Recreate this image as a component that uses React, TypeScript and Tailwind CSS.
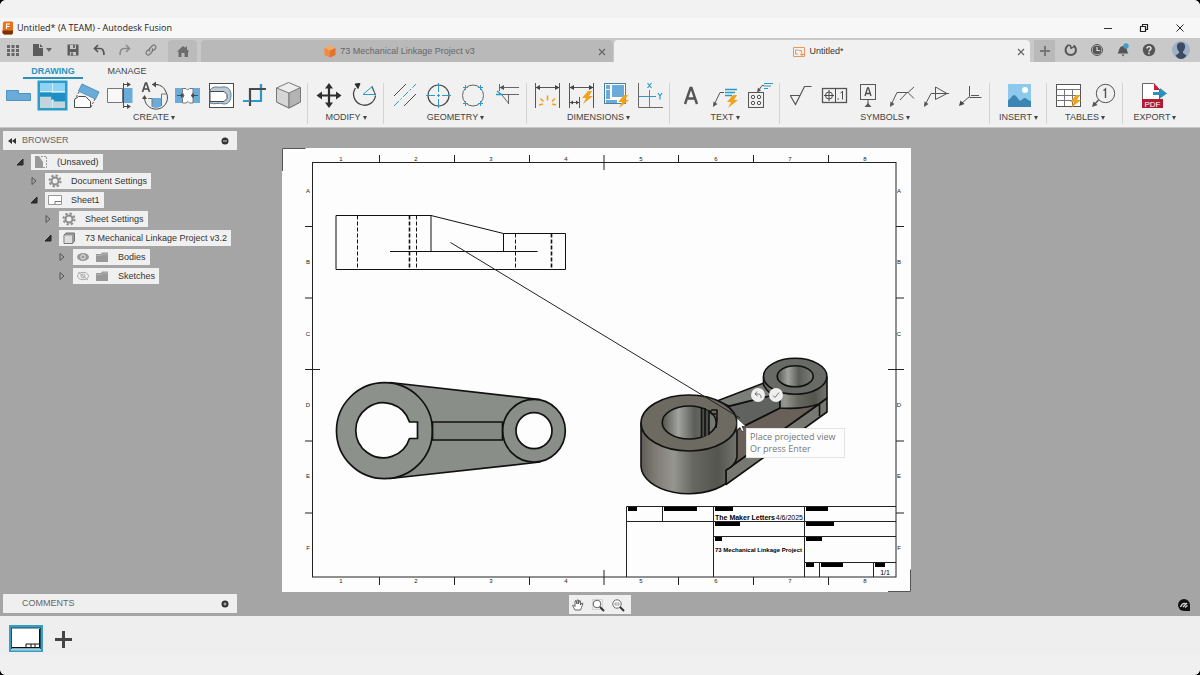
import React from "react";
import type { ReactNode } from "react";

const BLUE = "#6aabda";
const TEAL = "#2b9ac8";
const INK = "#4a4a4a";
const GOLD = "#f0a21e";

function Icon({ children }: { children: ReactNode }) {
  return (
    <svg viewBox="0 0 32 32" className="block h-8 w-8" fill="none" stroke={INK} strokeWidth="1" aria-hidden="true">
      {children}
    </svg>
  );
}

function Bolt({ x, y }: { x: number; y: number }) {
  return <path transform={`translate(${x} ${y})`} d="M6 0L0 7h4L1 13l10-8H7l3-5z" fill={GOLD} stroke="none" />;
}

type Tool = { name: string; art: ReactNode };
type Group = { label: string; width: string; tools: Tool[] };

const groups: Group[] = [
  {
    label: "CREATE",
    width: "w-[308px] justify-between pl-0.5 pr-[3px]",
    tools: [
      {
        name: "Base View",
        art: <path d="M4.5 11.5h12v3h12v7h-24z" fill={BLUE} stroke="#4f93c0" />,
      },
      {
        name: "Projected View",
        art: (
          <g stroke="none">
            <rect x="1.500" y="1.500" width="30" height="30" fill="#2a9dcc" />
            <rect x="4" y="4" width="25" height="11" fill="#8ed3f3" />
            <path d="M4 17.500h11v3h3v2h11V29H4z" fill="#c3d4dc" />
            <path d="M16.500 4v25M4 12.500h25" stroke="#d7eef8" />
            <path d="M4 13.500h12v4H4zM16 14h13v8H19v-1.500h-3z" fill="#1e8fc4" />
          </g>
        ),
      },
      {
        name: "Auxiliary View",
        art: (
          <g>
            <path d="M12 5l17 8-3.500 7-17-8z" fill={BLUE} stroke="#4f93c0" />
            <path d="M4.500 28.500v-8l4-3h7l5 5v6z" fill="#fff" />
            <path d="M9 13l-4 7M25 20l-4 8" strokeDasharray="2 1.5" />
          </g>
        ),
      },
      {
        name: "Section View",
        art: (
          <g>
            <path d="M3.500 9.500h15v14h-15z" fill="#f8f8f8" stroke="#777" />
            <path d="M19.500 9h9v15h-9z" fill={BLUE} stroke="none" />
            <path d="M19.500 4v25M19.500 5.500h5M19.500 27.500h5" />
            <path d="M23 3l4 2.500L23 8zM23 25l4 2.500-4 2.500z" fill={INK} stroke="none" />
          </g>
        ),
      },
      {
        name: "Detail View",
        art: (
          <g>
            <path d="M14 19h9v8.500a10 10 0 01-9 .5z" fill={BLUE} stroke="none" />
            <path d="M10 19.500h4v8M23.500 27v-12h5" stroke="#777" />
            <path d="M28 13a11.500 11.500 0 11-21.500 6M18 5.500a11.500 11.500 0 0110 7.500M14 5.500h6" />
            <path d="M18 2.500l-4 3 4 3zM6.500 16l-2.500 4h5z" fill={INK} stroke="none" />
            <path d="M4.500 13l3-9h1l3 9M5.500 10h5" strokeWidth="1.600" />
          </g>
        ),
      },
      {
        name: "Break View",
        art: (
          <g>
            <path d="M4 9h8v15H4zM21 9h8v15h-8z" fill={BLUE} stroke="none" />
            <path d="M11.500 9.500H15l1.500 1.500 2-1.500H22v4l-1.500 3 1.500 3v4.500h-3.500L17 22.500 15 24h-3.500v-4.500l1.500-3-1.500-3z" fill="#fff" stroke="#777" />
            <path d="M6 16.500h6M27 16.500h-6" />
            <path d="M10 14l3 2.500-3 2.500zM23 14l-3 2.500 3 2.500z" fill={INK} stroke="none" />
          </g>
        ),
      },
      {
        name: "Breakout View",
        art: (
          <g>
            <rect x="4.500" y="4.500" width="24" height="24" fill="#fff" />
            <path d="M5 11c4-5 8-2 12-3 5-1 9 2 9 8 0 5-2 9-7 9-5-2-9 1-14-1z" fill="#b9cad6" stroke="#5f7f98" />
            <path d="M5 12.500h14l3 3v4l-3 3H5z" fill="#fff" />
          </g>
        ),
      },
      {
        name: "Crop View",
        art: (
          <g strokeWidth="2.200">
            <path d="M22 5v17H5" stroke={TEAL} />
            <path d="M27 10H11v17" stroke={INK} />
            <path d="M4 22h7M22 5v4" stroke={TEAL} />
          </g>
        ),
      },
      {
        name: "Create Body",
        art: (
          <g stroke="#777" strokeWidth="1">
            <path d="M3.500 9l12-5.500 12 5v14.500l-11.500 6-12.500-6z" fill="#eee" />
            <path d="M3.500 9l12.500 5v15l-12.500-6z" fill="#d5d5d5" />
            <path d="M16 14l11.500-5.500V23L16 29z" fill="#b3b3b3" />
          </g>
        ),
      },
    ],
  },
  {
    label: "MODIFY",
    width: "w-[76px] justify-between px-1",
    tools: [
      {
        name: "Move",
        art: (
          <g>
            <path d="M17 8v17M8.500 16.500h17" strokeWidth="2.200" stroke="#2e2e2e" />
            <path d="M17 4l4 5.500h-8zM17 29l4-5.500h-8zM4.500 16.500L10 12.500v8zM29.500 16.500L24 12.500v8z" fill="#2e2e2e" stroke="none" />
          </g>
        ),
      },
      {
        name: "Rotate",
        art: (
          <g>
            <path d="M7.500 9A11 11 0 1027.500 16.500" stroke="#444" strokeWidth="1.300" />
            <path d="M12 4.500l-5 .5 3 4.500z" fill="#2e2e2e" stroke="#2e2e2e" />
            <path d="M15 15.500h12M15 15.500L23.500 8l4 7.500" stroke={TEAL} />
            <path d="M24 7l3.500 9" stroke="#555" />
          </g>
        ),
      },
    ],
  },
  {
    label: "GEOMETRY",
    width: "w-[143px] justify-between px-1",
    tools: [
      {
        name: "Centerline",
        art: (
          <g>
            <path d="M6 17L18 5M16 27L28 15" />
            <path d="M6 27L28 5" stroke={TEAL} strokeDasharray="7 2 2 2" />
          </g>
        ),
      },
      {
        name: "Center Mark",
        art: (
          <g>
            <circle cx="16.500" cy="16.500" r="10.500" strokeWidth="1.200" />
            <path d="M16.500 4v9M16.500 15v3M16.500 20v9M4 16.500h9M15 16.500h3M20 16.500h9" stroke={TEAL} />
          </g>
        ),
      },
      {
        name: "Center Mark Pattern",
        art: (
          <g>
            <circle cx="16" cy="16.500" r="10.500" stroke="#666" />
            <path d="M8.500 6v5M6 8.500h5M23.500 6v5M21 8.500h5M8.500 22v5M6 24.500h5M23.500 22v5M21 24.500h5" stroke={TEAL} />
          </g>
        ),
      },
      {
        name: "Edge Extension",
        art: (
          <g>
            <path d="M8.500 5v7M9 8.500h19M11 15.500h17M11 16L18 25M17.500 15v10" stroke="#666" />
            <path d="M13 6L8.500 8.500 13 11z" fill="#555" stroke="none" />
            <path d="M5 15.500h7M6 12l5 4" stroke={TEAL} strokeWidth="1.400" />
          </g>
        ),
      },
    ],
  },
  {
    label: "DIMENSIONS",
    width: "w-[143px] justify-between px-1",
    tools: [
      {
        name: "Dimension",
        art: (
          <g>
            <path d="M4.500 4v25M28.500 4v25M5 8.500h23" stroke="#555" />
            <path d="M9 6L4.500 8.500 9 11zM24 6l4.500 2.500L24 11z" fill="#444" stroke="none" />
            <path d="M8 26l4-1M9.500 19.500l3 3M16.500 16.500v5M24 19.500l-3 3M25 26l-4-1" stroke={GOLD} strokeWidth="1.600" />
          </g>
        ),
      },
      {
        name: "Baseline Dimension",
        art: (
          <g>
            <path d="M4.500 4v25M28.500 4v25M5 8.500h23M14.500 18v11M5 23.500h9" stroke="#555" />
            <path d="M9 6L4.500 8.500 9 11zM24 6l4.500 2.500L24 11zM8 21.500L5 23.500l3 2zM11 21.500l3 2-3 2z" fill="#444" stroke="none" />
            <Bolt x={17} y={12} />
          </g>
        ),
      },
      {
        name: "Auto Dimension",
        art: (
          <g>
            <rect x="4.500" y="4.500" width="21" height="20" fill="#fff" stroke="#4a7f9e" />
            <path d="M6 6h4v4H6zM6 11h4v9H6zM12 6h12v12H12zM6 21h11v3H6z" fill={BLUE} stroke="none" />
            <Bolt x={18} y={16} />
          </g>
        ),
      },
      {
        name: "Ordinate Dimension",
        art: (
          <g>
            <path d="M4.500 4v24.500H29" stroke="#666" />
            <path d="M5 17.500h17M15.500 11v17" stroke={TEAL} />
            <path d="M13.500 4l4 5M17.500 4l-4 5M24 14l2 3 2-3M26 17v3.500" stroke={TEAL} strokeWidth="1.200" />
          </g>
        ),
      },
    ],
  },
  {
    label: "TEXT",
    width: "w-[110px] justify-between px-1",
    tools: [
      {
        name: "Text",
        art: <path d="M11 25l5.500-16h1L23 25M12.500 19.500h9" stroke="#555" strokeWidth="2.400" />,
      },
      {
        name: "Leader Note",
        art: (
          <g>
            <path d="M5 26l6-12.500h4" stroke="#555" />
            <path d="M4 28l.500-5.500 4 2.500z" fill="#555" stroke="none" />
            <path d="M16 10.500h12M16 13.500h10M16 16.500h7" stroke={TEAL} strokeWidth="1.500" />
            <Bolt x={18} y={16} />
          </g>
        ),
      },
      {
        name: "Hole Table Note",
        art: (
          <g stroke="#555">
            <rect x="4.500" y="13.500" width="15" height="15" />
            <circle cx="9" cy="18" r="1.700" />
            <circle cx="15" cy="18" r="1.700" />
            <circle cx="9" cy="24" r="1.700" />
            <circle cx="15" cy="24" r="1.700" />
            <path d="M15 11l3-4.500h2" />
            <path d="M13 13.500l1-5 3 3z" fill="#555" stroke="none" />
            <path d="M20 4.500h9M20 7h7M20 9.500h4" stroke={TEAL} />
          </g>
        ),
      },
    ],
  },
  {
    label: "SYMBOLS",
    width: "w-[210px] justify-between px-1",
    tools: [
      {
        name: "Surface Texture",
        art: <path d="M6 16.500h10M6.500 17l5 8.500 9-18h7" stroke="#555" strokeWidth="1.200" />,
      },
      {
        name: "Feature Control Frame",
        art: (
          <g>
            <rect x="4.500" y="9.500" width="24" height="14" stroke="#555" strokeWidth="1.300" />
            <path d="M17.500 10v13M6 16.500h10M11 11v11M24.500 12v8.500M22.500 14l2-1.500M19.500 20h1.500" />
            <circle cx="11" cy="16.500" r="3.500" />
          </g>
        ),
      },
      {
        name: "Datum Identifier",
        art: (
          <g>
            <rect x="8.500" y="5.500" width="15" height="15" stroke="#555" />
            <path d="M13 17l2.500-8h1l2.500 8M14 14.500h4.500" strokeWidth="1.300" />
            <path d="M16 21v5" />
            <path d="M16 24l3.500 4h-7z" fill="#555" stroke="none" />
          </g>
        ),
      },
      {
        name: "Welding",
        art: (
          <g stroke="#555">
            <path d="M5 26l6-12.500h11M14 21l7-7.500M28 8l-6 5.500 6 6" />
            <path d="M4 28l.500-5.500 4 2.500z" fill="#555" stroke="none" />
          </g>
        ),
      },
      {
        name: "Taper and Slope",
        art: (
          <g stroke="#555">
            <path d="M5 26l6-11.500h18M15.500 8v12.500l11.500-6z" />
            <path d="M4 28l.500-5.500 4 2.500z" fill="#555" stroke="none" />
          </g>
        ),
      },
      {
        name: "Bend Identifier",
        art: (
          <g stroke="#555">
            <path d="M15.500 7v10.500L7 25M15.500 18.500h12M17 16.500h8" />
            <path d="M5 27l1.500-5.500L10.500 25z" fill="#444" stroke="none" />
          </g>
        ),
      },
    ],
  },
  {
    label: "INSERT",
    width: "w-[57px] justify-center",
    tools: [
      {
        name: "Insert Image",
        art: (
          <g stroke="none">
            <rect x="5" y="5" width="23" height="23" fill="#8cc9ec" />
            <circle cx="22" cy="11" r="3" fill="#fff" />
            <path d="M5 21c3-1 4-5 6-5s4 4 6 6c2-1 3-3 5-3s3 3 6 3v6H5z" fill="#3c86b4" />
          </g>
        ),
      },
    ],
  },
  {
    label: "TABLES",
    width: "w-[76px] justify-between px-1",
    tools: [
      {
        name: "Table",
        art: (
          <g>
            <rect x="5.500" y="5.500" width="24" height="22" fill="#fff" stroke="#555" />
            <path d="M5.500 10.500h24M5.500 16.500h24M5.500 21.500h24M13.500 10v17M21.500 10v17" stroke="#777" />
            <Bolt x={19} y={16} />
          </g>
        ),
      },
      {
        name: "Balloon",
        art: (
          <g stroke="#555">
            <circle cx="18.500" cy="14.500" r="9.200" />
            <path d="M11.500 21L7 26M16.500 11.500l2-1.500v9" strokeWidth="1.400" />
            <path d="M5 28l1.500-5.500L10.500 26z" fill="#555" stroke="none" />
          </g>
        ),
      },
    ],
  },
  {
    label: "EXPORT",
    width: "w-[64px] justify-center",
    tools: [
      {
        name: "Export PDF",
        art: (
          <g>
            <path d="M3.500 28V4.500h11l6 6V20" fill="#fff" stroke="#666" />
            <path d="M15 4v7h6z" fill="#c8203c" stroke="none" />
            <path d="M14 13h7V9l7 5.500-7 5V16h-7z" fill="#2d8fc0" stroke="none" />
            <rect x="3" y="20" width="21" height="9" fill="#b01c34" stroke="none" />
            <text x="13.500" y="28" textAnchor="middle" fill="#fff" stroke="none" className="font-['Liberation_Sans'] text-[8px]">
              PDF
            </text>
          </g>
        ),
      },
    ],
  },
];

function Ribbon() {
  return (
    <section className="border-b border-[#c9c9c9] bg-[#f1f1f1] pb-[3px]">
      <div className="flex h-[17px] pl-[23px] text-[9px] leading-[17px]">
        <button className="w-[60px] border-b-2 border-[#2b8fb8] pt-px font-bold text-[#2b93c0]">DRAWING</button>
        <button className="ml-3.5 w-[60px] border-b-2 border-transparent pt-px text-[#444]">MANAGE</button>
      </div>
      <div className="flex">
        {groups.map((g, i) => (
          <div key={g.label} className="relative flex shrink-0 flex-col">
            <div className={`flex ${g.width}`}>
              {g.tools.map((t) => (
                <button key={t.name} aria-label={t.name} className="h-8 w-8">
                  <Icon>{t.art}</Icon>
                </button>
              ))}
            </div>
            <button className="flex h-[13px] items-center justify-center gap-0.5 text-[9px] leading-[13px] text-[#444]">
              {g.label}
              <span className="h-0 w-0 border-x-[2px] border-t-4 border-x-transparent border-t-[#444]" />
            </button>
            {i < groups.length - 1 && <span className="absolute top-1 right-0 bottom-0 w-px bg-[#d4d4d4]" />}
          </div>
        ))}
      </div>
    </section>
  );
}

function SmallIcon({ children }: { children: ReactNode }) {
  return (
    <svg viewBox="0 0 16 16" className="block h-4 w-4" fill="none" stroke="#555" aria-hidden="true">
      {children}
    </svg>
  );
}

function TitleBar() {
  return (
    <header className="bg-[#f2f2f2] pt-[18px] font-['Open_Sans','Noto_Sans',sans-serif]">
      <div className="flex h-5 items-center bg-[#f7f7f7] pl-0.5">
        <svg viewBox="0 0 12 14" className="h-3.5 w-3" aria-hidden="true">
          <path d="M1 2l1-1.500h8l1 1V12l-1 1.500H2L.500 12z" fill="#e8701a" />
          <path d="M.500 9.500h10.500V12l-1 1.500H2L.500 12z" fill="#7c3208" />
          <path d="M4.500 8V3h3.500M4.500 5.500h3" stroke="#fff" strokeWidth="1.200" fill="none" />
        </svg>
        <h1 className="ml-[3px] flex-1 text-[9px] text-[#222]">Untitled* (A TEAM) - Autodesk Fusion</h1>
        <button aria-label="Minimize" className="flex w-9 justify-center">
          <span className="h-px w-2 bg-[#333]" />
        </button>
        <button aria-label="Restore" className="flex w-9 justify-center">
          <SmallIcon>
            <path d="M4.500 6.500h5v5h-5zM6.500 6V4.500h5v5H10" stroke="#222" strokeWidth="1.200" />
          </SmallIcon>
        </button>
        <button aria-label="Close window" className="mr-0.5 flex w-9 justify-center">
          <SmallIcon>
            <path d="M4.500 4.500l7 7M11.500 4.500l-7 7" stroke="#222" />
          </SmallIcon>
        </button>
      </div>
    </header>
  );
}

function CloseTab({ name }: { name: string }) {
  return (
    <button aria-label={`Close ${name}`} className="flex w-4 justify-center">
      <SmallIcon>
        <path d="M5 5l6 6M11 5l-6 6" stroke="#666" strokeWidth="1.200" />
      </SmallIcon>
    </button>
  );
}

function TabBar() {
  return (
    <nav className="flex h-6 bg-[#c9c9c9] text-[9px]">
      <button aria-label="Data panel" className="flex w-[25px] items-center justify-center">
        <SmallIcon>
          <path d="M2 3h3v3H2zM6.500 3h3v3h-3zM11 3h3v3h-3zM2 7h3v3H2zM6.500 7h3v3h-3zM11 7h3v3h-3zM2 11h3v3H2zM6.500 11h3v3h-3zM11 11h3v3h-3z" fill="#666" stroke="none" />
        </SmallIcon>
      </button>
      <button aria-label="File" className="flex w-[35px] items-center pl-[5px]">
        <SmallIcon>
          <path d="M3 2h6v4h4v8H3z" fill="#5c5c5c" stroke="none" />
          <path d="M10 2l3 3h-3z" fill="#5c5c5c" stroke="none" />
        </SmallIcon>
        <span className="h-0 w-0 border-x-[3px] border-t-4 border-x-transparent border-t-[#666]" />
      </button>
      <button aria-label="Save" className="flex w-[26px] items-center justify-center">
        <SmallIcon>
          <path d="M2.500 2.500h11v11h-11z" fill="#5c5c5c" stroke="none" />
          <path d="M5 3h6v4H5zM5 10h6v3H5z" fill="#c9c9c9" stroke="none" />
          <path d="M9 3v3M7 10.500v3" strokeWidth="1.600" />
        </SmallIcon>
      </button>
      <button aria-label="Undo" className="flex w-[26px] items-center justify-center">
        <SmallIcon>
          <path d="M7 3L3.500 6.500 7 10M4 6.500h5c3 0 4 2 4 6.500" strokeWidth="1.700" />
        </SmallIcon>
      </button>
      <button aria-label="Redo" className="flex w-[26px] items-center justify-center">
        <SmallIcon>
          <path d="M9 3l3.500 3.500L9 10M12 6.500H7c-3 0-4 2-4 6.500" stroke="#8a8a8a" strokeWidth="1.500" />
        </SmallIcon>
      </button>
      <button aria-label="Link" className="flex w-[26px] items-center justify-center">
        <SmallIcon>
          <path d="M7 9.500c-1.500-1.500-.500-3 .500-4l2-2c2-1.500 4.500 1 3 3l-2 2M9 6.500c1.500 1.500.500 3-.500 4l-2 2c-2 1.500-4.500-1-3-3l2-2" stroke="#777" strokeWidth="1.200" />
        </SmallIcon>
      </button>
      <button aria-label="Home" className="mt-0.5 ml-1 flex w-[29px] items-center justify-center rounded-t bg-[#bbbbbb]">
        <SmallIcon>
          <path d="M2 8.500L8 3l2.500 2V3.500H12V6.500l2.500 2H13V14H9.500v-4h-3v4H3.500V8.500z" fill="#6c6c6c" stroke="none" />
        </SmallIcon>
      </button>
      <div className="mt-0.5 ml-1 flex flex-1 items-center rounded-t bg-[#b9b9b9] pt-px pr-[3px] pl-1">
        <button className="flex flex-1 items-center justify-center gap-1 text-[#666]">
          <svg viewBox="0 0 12 13" className="h-[13px] w-3" aria-hidden="true">
            <path d="M.500 3L6 .500 11.500 3v7L6 12.500.500 10z" fill="#f6a866" />
            <path d="M.500 3L6 5.500v7L.500 10z" fill="#ee8a44" />
            <path d="M6 5.500L11.500 3v7L6 12.500z" fill="#dd7430" />
          </svg>
          73 Mechanical Linkage Project v3
        </button>
        <CloseTab name="73 Mechanical Linkage Project v3" />
      </div>
      <div className="mt-0.5 ml-px flex flex-1 items-center rounded-t bg-[#f1f1f1] pt-px pr-px pl-2.5">
        <button className="flex flex-1 items-center justify-center gap-1 text-[#333]">
          <svg viewBox="0 0 12 12" className="h-3 w-3" fill="none" stroke="#e9965f" aria-hidden="true">
            <path d="M.500 1.500h11v9H.500z" />
            <path d="M5 4H2.500v4H5M5.500 4.500h3v3M7 8.500h4M9 10V7.500" />
          </svg>
          Untitled*
        </button>
        <CloseTab name="Untitled" />
      </div>
      <button aria-label="New tab" className="mt-0.5 ml-1 flex w-[21px] items-center justify-center bg-[#b9b9b9]">
        <SmallIcon>
          <path d="M8 3v10M3 8h10" stroke="#777" strokeWidth="2" />
        </SmallIcon>
      </button>
      <button aria-label="Extensions" className="ml-[3px] flex w-[26px] items-center justify-center">
        <SmallIcon>
          <path d="M10.500 3.500a5.200 5.200 0 11-5.500 0" strokeWidth="2" />
          <path d="M4.500 3l3 .500.500 3.500M8 6.500l4-2.500" strokeWidth="1.400" />
        </SmallIcon>
      </button>
      <button aria-label="Job status" className="flex w-[26px] items-center justify-center">
        <SmallIcon>
          <circle cx="8" cy="8" r="5.500" />
          <circle cx="8" cy="8" r="4" fill="#555" />
          <path d="M8 5v3.500h3" stroke="#ddd" strokeWidth="1.200" />
        </SmallIcon>
      </button>
      <button aria-label="Notifications" className="flex w-[26px] items-center justify-center">
        <SmallIcon>
          <path d="M2.500 11.500c2-2 1-7 5.500-7.500s3.500 5.500 5.500 7.500zM6.500 12.500h3L8 14.500z" fill="#555" stroke="none" />
          <circle cx="11" cy="4" r="2.700" fill="#3b9fc9" stroke="none" />
        </SmallIcon>
      </button>
      <button aria-label="Help" className="flex w-[26px] items-center justify-center">
        <SmallIcon>
          <circle cx="8" cy="8" r="6.200" fill="#555" stroke="none" />
          <path d="M6 6.500c0-2.500 4-2.500 4 0C10 8 8 8 8 9.500M8 10.500v1.700" stroke="#eee" strokeWidth="1.400" />
        </SmallIcon>
      </button>
      <button aria-label="Account" className="flex w-[38px] items-center justify-center">
        <svg viewBox="0 0 18 18" className="h-[18px] w-[18px]" aria-hidden="true">
          <circle cx="9" cy="9" r="9" fill="#9fb1c8" />
          <path d="M9 1.500c3 0 4.500 2 4 5-.300 2-1 3-2 4v1.500l3.500 2.500C13 17 11 18 9 18s-4-1-5.500-3.500L7 12v-1.500c-1-1-1.700-2-2-4-.500-3 1-5 4-5z" fill="#3c4b62" />
        </svg>
      </button>
    </nav>
  );
}

const gear = (
  <SmallIcon>
    <circle cx="8" cy="8" r="3.500" stroke="#8c8c8c" strokeWidth="2" />
    <circle cx="8" cy="8" r="5.500" stroke="#8c8c8c" strokeWidth="2" strokeDasharray="2.3 2" />
  </SmallIcon>
);
const folder = (
  <SmallIcon>
    <path d="M2 5h5l1-1.500h6V13H2z" fill="#999" stroke="none" />
    <path d="M2 6.500h6l1-1.500h5" stroke="#bbb" strokeWidth=".7" />
  </SmallIcon>
);

type Row = { label: string; indent: string; open: boolean; icons: ReactNode[] };

const rows: Row[] = [
  {
    label: "(Unsaved)",
    indent: "pl-3.5",
    open: true,
    icons: [
      <SmallIcon>
        <path d="M2 2h4l4 6v6H2z" fill="#999" stroke="none" />
        <path d="M8 2.500h5.500v11H10" stroke="#999" strokeDasharray="2 1" />
      </SmallIcon>,
    ],
  },
  { label: "Document Settings", indent: "pl-7", open: false, icons: [gear] },
  {
    label: "Sheet1",
    indent: "pl-7",
    open: true,
    icons: [
      <SmallIcon>
        <path d="M1.500 3.500h13v9h-13z" fill="#fff" stroke="#999" />
        <path d="M8 12V9.500h6" stroke="#777" />
      </SmallIcon>,
    ],
  },
  { label: "Sheet Settings", indent: "pl-[42px]", open: false, icons: [gear] },
  {
    label: "73 Mechanical Linkage Project v3.2",
    indent: "pl-[42px]",
    open: true,
    icons: [
      <SmallIcon>
        <path d="M3 5l2-2h8.500v8l-2 2.500H3z" fill="#999" stroke="#777" />
        <path d="M3.500 5.500h7.500V13H3.500z" fill="#dedede" stroke="none" />
      </SmallIcon>,
    ],
  },
  {
    label: "Bodies",
    indent: "pl-14",
    open: false,
    icons: [
      <SmallIcon>
        <ellipse cx="8" cy="8" rx="6" ry="4" fill="#999" stroke="none" />
        <circle cx="8" cy="8" r="2.200" fill="#999" stroke="#eee" />
      </SmallIcon>,
      folder,
    ],
  },
  {
    label: "Sketches",
    indent: "pl-14",
    open: false,
    icons: [
      <SmallIcon>
        <ellipse cx="8" cy="8" rx="5.500" ry="3.700" stroke="#aaa" />
        <circle cx="8" cy="8" r="2" stroke="#aaa" />
        <path d="M3 4l10 8" stroke="#aaa" />
      </SmallIcon>,
      folder,
    ],
  },
];

function PanelHeader({ title, children, dot }: { title: string; children?: ReactNode; dot: ReactNode }) {
  return (
    <div className="ml-[3px] flex h-[19px] w-[234px] items-center bg-[#efefef] pr-1">
      <span className="flex w-[19px] justify-center">{children}</span>
      <h2 className="flex-1 pt-px text-[9px] text-[#666]">{title}</h2>
      <button aria-label={`${title} options`}>{dot}</button>
    </div>
  );
}

function Browser() {
  return (
    <aside className="flex w-60 shrink-0 flex-col pt-[3px] pb-[3px]">
      <PanelHeader
        title="BROWSER"
        dot={
          <SmallIcon>
            <circle cx="8" cy="8" r="3.500" fill="#333" stroke="none" />
            <path d="M6 8h4" stroke="#ccc" />
          </SmallIcon>
        }
      >
        <svg viewBox="0 0 8 6" className="mr-0.5 h-1.5 w-2" aria-hidden="true">
          <path d="M4 0v6L0 3zM8 0v6L4 3z" fill="#333" />
        </svg>
      </PanelHeader>
      <ul className="mt-1 flex flex-1 flex-col gap-[3px]">
        {rows.map((r) => (
          <li key={r.label} className={`flex h-4 items-center ${r.indent}`}>
            <button aria-label={`Toggle ${r.label}`} className="flex w-[17px] pl-0.5">
              <svg viewBox="0 0 8 8" className="h-2 w-2" aria-hidden="true">
                {r.open ? <path d="M7 1v6H1z" fill="#333" stroke="#222" /> : <path d="M2 .500L6 4 2 7.500z" fill="none" stroke="#555" />}
              </svg>
            </button>
            <div className="flex h-4 items-center bg-[#f0f0f0] pr-1 text-[9px] text-[#333]">
              {r.icons.map((icon, i) => (
                <span key={i} className="flex w-[19px] justify-center">
                  {icon}
                </span>
              ))}
              <span className="pt-px pl-[7px]">{r.label}</span>
            </div>
          </li>
        ))}
      </ul>
      <PanelHeader
        title="COMMENTS"
        dot={
          <SmallIcon>
            <circle cx="8" cy="8" r="3.500" fill="#333" stroke="none" />
            <path d="M6.500 8h3M8 6.500v3" stroke="#ccc" />
          </SmallIcon>
        }
      />
    </aside>
  );
}

const columnMarks = [341, 416, 491, 566, 641, 716, 790, 865];
const columnTicks = [379.5, 454.5, 529.5, 604, 678.5, 753.5, 828.5];
const rowMarks = [191, 262, 334, 405, 476, 548];
const rowTicks = [226.5, 298, 369.5, 441, 513];

function SheetFrame() {
  return (
    <g stroke="#222" fill="none">
      <rect x="312.500" y="162.500" width="583.500" height="414.500" />
      {columnTicks.map((x) => (
        <path key={x} d={`M${x} 155V${x === 604 ? 170 : 162}M${x} ${x === 604 ? 570 : 577}v${x === 604 ? 15 : 8}`} />
      ))}
      {rowTicks.map((y) => (
        <path key={y} d={`M305 ${y}h${y === 369.5 ? 15 : 7}M904 ${y}h${y === 369.5 ? -16 : -8}`} />
      ))}
      <path d="M282.500 171v-22.500h23M888 591.500h22.500v-22" stroke="#555" />
      <g fill="#222" stroke="none" textAnchor="middle" className="font-['Liberation_Sans'] text-[6px]">
        {columnMarks.map((x, i) => (
          <g key={x}>
            <text x={x} y="161">{i + 1}</text>
            <text x={x} y="583">{i + 1}</text>
          </g>
        ))}
        {rowMarks.map((y, i) => (
          <g key={y}>
            <text x="308" y={y + 2}>{"ABCDEF"[i]}</text>
            <text x="899" y={y + 2}>{"ABCDEF"[i]}</text>
          </g>
        ))}
      </g>
    </g>
  );
}

function SideView() {
  return (
    <g stroke="#111" fill="none">
      <path d="M431 215.500H336v54h229.500v-36h-62L431 215.500v36M503.500 233.500v18M390 251.500h147.500" />
      <path d="M357.500 215.500v54M416.500 215.500v54M515.500 233.500v36" strokeDasharray="4 2" />
      <path d="M409.500 215.500v54M551.500 233.500v36" strokeDasharray="4 2" strokeWidth="1.600" />
    </g>
  );
}

function FrontView() {
  return (
    <g stroke="#111" strokeWidth="1.700" strokeLinejoin="round">
      <path d="M390 382.500L540 399.500v62.500L390 478.500z" fill="#8a8e88" />
      <circle cx="384.500" cy="430.700" r="48" fill="#8c918b" />
      <rect x="432.500" y="422" width="70" height="18" fill="#858983" />
      <circle cx="534" cy="430.700" r="31.300" fill="#8a8e88" />
      <circle cx="534" cy="430.700" r="18" fill="#fdfdfd" />
      <path d="M409.500 422h8v16.500h-8A27.500 27.500 0 11409.500 422z" fill="#fdfdfd" />
    </g>
  );
}

function IsoView() {
  return (
    <g stroke="#111" strokeWidth="1.600" strokeLinejoin="round">
      <defs>
        <linearGradient id="barrel">
          <stop offset="0" stopColor="#5f5c56" />
          <stop offset=".14" stopColor="#7d7a72" />
          <stop offset=".34" stopColor="#969690" />
          <stop offset=".54" stopColor="#686863" />
          <stop offset=".8" stopColor="#55554f" />
          <stop offset="1" stopColor="#74746e" />
        </linearGradient>
        <linearGradient id="bore">
          <stop offset="0" stopColor="#55554f" />
          <stop offset=".3" stopColor="#a0a39e" />
          <stop offset=".6" stopColor="#5b5d59" />
          <stop offset="1" stopColor="#7c7e79" />
        </linearGradient>
      </defs>
      <path d="M726 470L819 404l8-6v14L726 484.500z" fill="#777872" />
      <path d="M736 430l44-22 39-4-93 66z" fill="#686059" />
      <path d="M727 407l53-14v15l-44 22z" fill="#5f625e" />
      <path d="M717 401l47-18 14 11-49 12z" fill="#7c7e79" />
      <path d="M763.500 377v8c3 6 9 11 16.500 13v10c13 1 27 0 39-4l8-6V377z" fill="url(#barrel)" />
      <path d="M819.500 403v13" fill="none" />
      <ellipse cx="795.200" cy="376.300" rx="31.700" ry="18" fill="#686a65" />
      <ellipse cx="795.200" cy="376.300" rx="18" ry="10.500" fill="url(#bore)" />
      <path d="M641 423v43.500a48 28 0 0085 17V470c7-3 10-8 11-13v-34z" fill="url(#barrel)" />
      <ellipse cx="689" cy="423" rx="48" ry="28" fill="#6d6a62" />
      <path d="M710 412l2-2h5v10l-1 8" fill="#6d6a62" />
      <ellipse cx="689.200" cy="422.500" rx="27" ry="16.500" fill="url(#bore)" />
      <path d="M702 409l7 2v24l-7 2z" fill="#4c4d49" stroke="none" />
      <path d="M701.500 408v29M705 408v28M709 410v25M709 411l3 3h4" fill="none" />
    </g>
  );
}

const bars: [number, number, number][] = [
  [628, 507, 9], [664, 507, 33], [715, 507, 18], [806, 507, 22],
  [715, 522, 25], [806, 522, 28], [715, 537, 7], [806, 537, 16],
  [806, 563, 8], [821, 563, 22], [875, 563, 10],
];

function TitleBlock() {
  return (
    <g>
      <path
        d="M896 506.500H626.500V577M626 521.500h270M713 536.500h183M804 562.500h92M662.500 506v15M713.500 506v71M804.500 506v71M819.500 562v15M873.500 562v15"
        stroke="#222"
        fill="none"
      />
      {bars.map(([x, y, w]) => (
        <rect key={`${x}-${y}`} x={x} y={y} width={w} height="4" fill="#000" />
      ))}
      <g fill="#000" className="font-['Liberation_Sans']">
        <text x="715" y="520" className="text-[7px] font-bold">The Maker Letters</text>
        <text x="803" y="520" textAnchor="end" className="text-[7px]">4/6/2025</text>
        <text x="715" y="552" className="text-[6px] font-bold">73 Mechanical Linkage Project</text>
        <text x="885" y="575" textAnchor="middle" className="text-[7px]">1/1</text>
      </g>
    </g>
  );
}

function Sheet() {
  return (
    <div className="relative mr-[7px] w-[629px] shrink-0">
      <svg viewBox="282 148 629 444" className="block w-full bg-[#fdfdfd]" role="img" aria-label="Drawing sheet">
        <SheetFrame />
        <SideView />
        <FrontView />
        <IsoView />
        <TitleBlock />
        <path d="M450.500 242.500L740 418" stroke="#222" />
        <path d="M737 418v12l3-2.500 2 4 2-1-2-4h4z" fill="#fff" stroke="#333" strokeWidth=".7" />
      </svg>
      <div className="absolute top-60 left-[469px] flex gap-1">
        <button aria-label="Undo point" className="rounded-full bg-[#efefef]">
          <svg viewBox="0 0 14 14" className="h-3.5 w-3.5" fill="none" stroke="#777" aria-hidden="true">
            <path d="M6 3.500L4 6l2.500 2M4 6h3.500c2 0 2.500 2 2.500 4" />
          </svg>
        </button>
        <button aria-label="Confirm" className="rounded-full bg-[#efefef]">
          <svg viewBox="0 0 14 14" className="h-3.5 w-3.5" fill="none" stroke="#777" aria-hidden="true">
            <path d="M4 7.500L6 9.500l4-5" />
          </svg>
        </button>
      </div>
      <div
        role="tooltip"
        className="absolute top-[280px] left-[464px] border border-[#e4e4e4] bg-[#fdfdfd] py-0.5 pr-2 pl-[3px] font-['Open_Sans','Noto_Sans',sans-serif] text-[9px] leading-3 whitespace-nowrap text-[#777]"
      >
        <p>Place projected view</p>
        <p>Or press Enter</p>
      </div>
    </div>
  );
}

function ViewTools() {
  return (
    <div className="mt-[3px] flex h-[19px] w-[62px] items-center gap-1 bg-[#efefef] pl-px">
      <button aria-label="Pan">
        <SmallIcon>
          <path d="M5 13L2.500 8.500l1-.500L5 9.500V4l1-.500L7 7V3h1.500v4l1-3.500 1 .500v4l1.500-2 1 .500-1.500 4-1 2.500z" fill="#fff" stroke="#555" strokeWidth=".9" />
        </SmallIcon>
      </button>
      <button aria-label="Zoom window">
        <SmallIcon>
          <path d="M2.500 2.500h10v10h-10z" stroke="#bbb" strokeDasharray="1 1" />
          <circle cx="7" cy="7" r="3.800" fill="#fff" stroke="#666" />
          <path d="M10 10l4 4" stroke="#333" strokeWidth="2" />
        </SmallIcon>
      </button>
      <button aria-label="Zoom fit">
        <SmallIcon>
          <circle cx="7" cy="7" r="4.200" fill="#fff" stroke="#666" />
          <path d="M5 6h4v2H5z" stroke="#888" strokeWidth=".8" />
          <path d="M10 10l4 4" stroke="#333" strokeWidth="2" />
        </SmallIcon>
      </button>
    </div>
  );
}

function SheetStrip() {
  return (
    <footer className="bg-[#f0f0f0] pb-5">
      <div className="flex h-[39px] items-start bg-[#eeeeee] pt-[9px] pl-[9px]">
        <button aria-label="Sheet 1">
          <svg viewBox="0 0 34 27" className="block h-[27px] w-[34px]" fill="none" aria-hidden="true">
            <rect width="34" height="27" fill="#3a9cbf" />
            <rect x="2.500" y="3" width="29" height="21" fill="#fff" stroke="#1f4f63" />
            <path d="M2 24.800h30" stroke="#9ad8ee" strokeWidth="1.500" />
            <path d="M3 22.500h28M17 22v-3h14M22 19v3M26 19v3M30.500 4v18" stroke="#111" />
          </svg>
        </button>
        <button aria-label="Add sheet" className="ml-2.5 p-px">
          <svg viewBox="0 0 20 20" className="mt-1 block h-5 w-5" aria-hidden="true">
            <path d="M9.500 1v17M1 9.500h17" stroke="#444" strokeWidth="3" />
          </svg>
        </button>
      </div>
    </footer>
  );
}

export default function App() {
  return (
    <div className="bg-black">
      <div className="flex min-h-screen flex-col overflow-hidden rounded-md bg-[#f1f1f1] font-['Liberation_Sans',Arial,sans-serif]">
        <TitleBar />
        <TabBar />
        <Ribbon />
        <main className="flex flex-1 bg-[#a5a5a5]">
          <Browser />
          <div className="flex flex-1 flex-col items-center pt-5">
            <Sheet />
            <ViewTools />
          </div>
          <div className="flex w-60 shrink-0 items-end justify-end pr-[9px] pb-1">
            <button aria-label="Assistant">
              <svg viewBox="0 0 14 14" className="block h-3.5 w-3.5" aria-hidden="true">
                <path d="M7 1a6 6 0 000 12h6V7a6 6 0 00-6-6z" fill="#111" />
                <path d="M3.500 9C5 5.500 7 5 8.500 5.500M6 9l4-4M8 9.500l2.500-2" stroke="#ddd" strokeWidth="1.200" fill="none" />
              </svg>
            </button>
          </div>
        </main>
        <SheetStrip />
      </div>
    </div>
  );
}
